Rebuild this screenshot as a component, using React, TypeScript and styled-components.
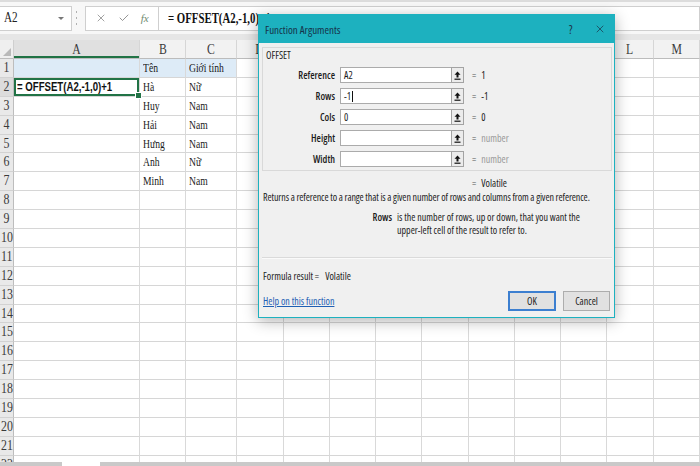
import React from "react";
import styled, { createGlobalStyle } from "styled-components";
import { X, Check } from "lucide-react";

const GlobalStyle = createGlobalStyle`
  html, body { margin: 0; padding: 0; background: #ffffff; }
  * { box-sizing: border-box; }
`;

const App_ = styled.div`
  position: relative;
  width: 700px;
  height: 466px;
  overflow: hidden;
  display: flex;
  flex-direction: column;
  background: #ffffff;
`;

/* ---------- formula bar ---------- */
const TopBar = styled.div`
  flex: none;
  height: 34px;
  display: flex;
  align-items: center;
  background: #f7f7f7;
  border-top: 2px solid #dcdcdc;
`;
const NameBox = styled.div`
  width: 72px;
  height: 25px;
  background: #fff;
  border: 1px solid #cfcfcf;
  border-left: none;
  display: flex;
  align-items: center;
  justify-content: space-between;
  padding: 0 7px 0 4px;
  color: #222;
`;
const NameText = styled.span`
  display: inline-block;
  font-family: "Liberation Serif", serif;
  font-size: 14px;
  transform: scaleX(0.8);
  transform-origin: left center;
`;
const Caret = styled.span`
  width: 0;
  height: 0;
  border-left: 3px solid transparent;
  border-right: 3px solid transparent;
  border-top: 3px solid #777;
`;
const Grip = styled.div`
  width: 13px;
  height: 14px;
  display: flex;
  flex-direction: column;
  align-items: center;
  justify-content: space-between;
  padding-right: 4px;
`;
const GripDot = styled.span`
  width: 1px;
  height: 2px;
  background: #b0b0b0;
`;
const FxBox = styled.div`
  width: 73px;
  height: 25px;
  background: #fff;
  border: 1px solid #cfcfcf;
  border-right: none;
  display: flex;
  align-items: center;
  justify-content: space-around;
  padding: 0 4px;
  color: #7a7a7a;
`;
const Fx = styled.span`
  font-family: "Liberation Serif", serif;
  font-style: italic;
  font-size: 11px;
  color: #6f8a6f;
`;
const FormulaBox = styled.div`
  flex: 1;
  height: 25px;
  background: #fff;
  border: 1px solid #cfcfcf;
  display: flex;
  align-items: center;
  padding-left: 9px;
  color: #111;
`;
const FormulaText = styled.span`
  display: inline-block;
  white-space: nowrap;
  font-family: "Liberation Serif", serif;
  font-size: 15px;
  font-weight: 700;
  transform: scaleX(0.72);
  transform-origin: left center;
`;
const Band = styled.div`
  flex: none;
  height: 6px;
  background: #e6e6e6;
`;

/* ---------- sheet ---------- */
const Sheet = styled.div`
  flex: 1;
  min-height: 0;
  overflow: hidden;
  display: grid;
  grid-template-columns: 14px 126px repeat(12, 1fr);
  grid-template-rows: 19px;
  grid-auto-rows: 18.9px;
  align-content: start;
`;
const Squeeze = styled.span<{ $k: number; $center?: boolean }>`
  display: inline-block;
  white-space: nowrap;
  transform: scaleX(${(p) => p.$k});
  transform-origin: ${(p) => (p.$center ? "center" : "left")} center;
`;
const Corner = styled.div`
  position: relative;
  background: #efefef;
  border-right: 1px solid #cfcfcf;
  border-bottom: 1px solid #bcbcbc;
  &::after {
    content: "";
    position: absolute;
    right: 2px;
    bottom: 2px;
    border-left: 8px solid transparent;
    border-bottom: 8px solid #b9b9b9;
  }
`;
const ColHead = styled.div<{ $active?: boolean }>`
  background: ${(p) => (p.$active ? "#e0e0e0" : "#f2f2f2")};
  border-right: 1px solid #d6d6d6;
  border-bottom: 1px solid #bcbcbc;
  box-shadow: ${(p) => (p.$active ? "inset 0 -2px 0 #217346" : "none")};
  display: flex;
  align-items: center;
  justify-content: center;
  font-family: "Liberation Serif", serif;
  font-size: 15px;
  color: #3a3a3a;
`;
const RowHead = styled.div<{ $active?: boolean }>`
  background: ${(p) => (p.$active ? "#dcdcdc" : "#e9e9e9")};
  border-right: 1px solid #bdbdbd;
  border-bottom: 1px solid #d2d2d2;
  display: flex;
  align-items: center;
  justify-content: center;
  font-family: "Liberation Serif", serif;
  font-size: 14px;
  color: #3a3a3a;
`;
const Cell = styled.div<{ $fill?: boolean; $selected?: boolean }>`
  position: relative;
  background: ${(p) => (p.$fill ? "#ddebf7" : "#ffffff")};
  border-right: 1px solid #d9d9d9;
  border-bottom: 1px solid #d6d6d6;
  display: flex;
  align-items: center;
  padding-left: 3px;
  font-family: "Liberation Serif", serif;
  font-size: 13px;
  color: #1a1a1a;
  box-shadow: ${(p) => (p.$selected ? "inset 0 0 0 2px #217346" : "none")};
  ${(p) =>
    p.$selected
      ? `&::after {
    content: "";
    position: absolute;
    right: -3px;
    bottom: -3px;
    width: 5px;
    height: 5px;
    background: #217346;
    border: 1px solid #fff;
    z-index: 2;
  }`
      : ""}
`;
const BoldFormula = styled.span`
  font-family: "Liberation Sans", Arial, sans-serif;
  font-weight: bold;
  font-size: 13px;
  color: #111;
`;
const TabBar = styled.div`
  flex: none;
  height: 4px;
  background: #c9c9c9;
  display: flex;
`;
const Tab = styled.div`
  margin-left: 62px;
  width: 38px;
  background: #ffffff;
`;

/* ---------- dialog ---------- */
const Dialog = styled.div`
  position: absolute;
  left: 258px;
  top: 14px;
  width: 357px;
  height: 304px;
  border: 1px solid #1db1bf;
  background: #f0f0f0;
  box-shadow: 0 3px 14px rgba(0, 0, 0, 0.3);
  display: flex;
  flex-direction: column;
  font-family: "Open Sans", sans-serif;
  font-stretch: 75%;
  color: #1c1c1c;
  z-index: 5;
`;
const TitleBar = styled.div`
  flex: none;
  height: 28px;
  background: #1db1bf;
  display: flex;
  align-items: center;
  padding-left: 6px;
`;
const Title = styled.div`
  flex: 1;
  font-size: 11px;
  color: #16324a;
`;
const TitleBtn = styled.div`
  width: 29px;
  height: 28px;
  display: flex;
  align-items: center;
  justify-content: center;
  font-size: 12px;
  color: #1d3347;
`;
const Body = styled.div`
  flex: 1;
  display: flex;
  flex-direction: column;
  padding: 4px 2px 6px 4px;
  font-size: 10px;
`;
const Group = styled.div`
  margin-left: -1px;
  height: 124px;
  border: 1px solid #d9d9d9;
  display: flex;
  flex-direction: column;
`;
const FuncName = styled.div`
  margin-left: 3px;
  line-height: 14px;
  font-size: 10px;
`;
const Fields = styled.div`
  margin-top: 5px;
  display: flex;
  flex-direction: column;
  gap: 5px;
`;
const FieldRow = styled.div`
  display: grid;
  grid-template-columns: 77px 111px 13px auto;
  height: 16px;
  align-items: center;
`;
const Label = styled.div`
  text-align: right;
  padding-right: 5px;
  font-weight: 600;
  font-size: 10px;
`;
const Input = styled.div`
  height: 16px;
  background: #fff;
  border: 1px solid #ababab;
  border-right: none;
  display: flex;
  align-items: center;
  padding-left: 3px;
  font-size: 10px;
`;
const TextCaret = styled.span`
  display: inline-block;
  width: 1px;
  height: 11px;
  background: #111;
  margin-left: 1px;
`;
const PickBtn = styled.div`
  height: 16px;
  background: #ececec;
  border: 1px solid #a3a3a3;
  display: flex;
  align-items: center;
  justify-content: center;
`;
const Eq = styled.div<{ $muted?: boolean }>`
  padding-left: 8px;
  display: flex;
  gap: 5px;
  font-size: 10px;
  color: ${(p) => (p.$muted ? "#9a9a9a" : "#1c1c1c")};
`;
const EqSign = styled.span`
  color: #555;
`;
const ResultLine = styled.div`
  margin-top: 5px;
  margin-left: 209px;
  line-height: 14px;
  display: flex;
  gap: 5px;
`;
const Desc = styled.div`
  line-height: 14px;
  letter-spacing: -0.1px;
  white-space: nowrap;
`;
const ArgHelp = styled.div`
  margin-top: 7px;
  display: grid;
  grid-template-columns: 129px auto;
  column-gap: 5px;
  line-height: 13px;
`;
const ArgName = styled.div`
  text-align: right;
  font-weight: 600;
`;
const ArgText = styled.div`
  white-space: nowrap;
`;
const Divider = styled.div`
  margin-top: 20px;
  margin-left: -1px;
  height: 1px;
  background: #dadada;
  box-shadow: 0 1px 0 #fafafa;
`;
const FormulaResult = styled.div`
  margin-top: 11px;
  line-height: 14px;
  display: flex;
  gap: 6px;
`;
const Footer = styled.div`
  margin-top: auto;
  display: flex;
  align-items: center;
  gap: 7px;
  margin-right: 2px;
`;
const HelpLink = styled.a`
  flex: 1;
  color: #1f5fb4;
  text-decoration: underline;
  font-size: 10px;
  cursor: pointer;
`;
const Button = styled.button<{ $primary?: boolean }>`
  width: ${(p) => (p.$primary ? "48px" : "47px")};
  height: 20px;
  background: #e1e1e1;
  border: ${(p) => (p.$primary ? "2px solid #3c7fd0" : "1px solid #adadad")};
  font-family: "Open Sans", sans-serif;
  font-stretch: 75%;
  font-size: 10px;
  color: #1c1c1c;
  padding: 0;
`;

const PickIcon = () => (
  <svg width="7" height="9" viewBox="0 0 7 9">
    <path d="M3.5 0.5 L6.5 3.8 H4.5 V6.5 H2.5 V3.8 H0.5 Z" fill="#111" />
    <rect x="0.5" y="7.6" width="6" height="1.2" fill="#111" />
  </svg>
);

const colLetters = ["A", "B", "C", "D", "E", "F", "G", "H", "I", "J", "K", "L", "M"];
const colB = ["Tên", "Hà", "Huy", "Hải", "Hưng", "Anh", "Minh"];
const colC = ["Giới tính", "Nữ", "Nam", "Nam", "Nam", "Nữ", "Nam"];
const ROWS = 22;

type Field = { label: string; value?: React.ReactNode; result: string; muted?: boolean };
const fields: Field[] = [
  { label: "Reference", value: "A2", result: "1" },
  {
    label: "Rows",
    value: (
      <>
        -1
        <TextCaret />
      </>
    ),
    result: "-1",
  },
  { label: "Cols", value: "0", result: "0" },
  { label: "Height", result: "number", muted: true },
  { label: "Width", result: "number", muted: true },
];

export default function App() {
  const rows = Array.from({ length: ROWS }, (_, i) => i + 1);
  return (
    <App_>
      <GlobalStyle />
      <TopBar>
        <NameBox>
          <NameText>A2</NameText>
          <Caret />
        </NameBox>
        <Grip>
          <GripDot />
          <GripDot />
          <GripDot />
        </Grip>
        <FxBox>
          <X size={12} strokeWidth={1.4} />
          <Check size={12} strokeWidth={1.6} />
          <Fx>fx</Fx>
        </FxBox>
        <FormulaBox>
          <FormulaText>= OFFSET(A2,-1,0)+1</FormulaText>
        </FormulaBox>
      </TopBar>
      <Band />
      <Sheet>
        <Corner />
        {colLetters.map((c) => (
          <ColHead key={c} $active={c === "A"}>
            <Squeeze $k={0.78} $center>
              {c}
            </Squeeze>
          </ColHead>
        ))}
        {rows.map((r) => (
          <React.Fragment key={r}>
            <RowHead $active={r === 2}>
              <Squeeze $k={0.85} $center>
                {r}
              </Squeeze>
            </RowHead>
            {colLetters.map((c) => {
              let content: React.ReactNode = null;
              if (c === "A" && r === 2)
                content = (
                  <Squeeze $k={0.74}>
                    <BoldFormula>= OFFSET(A2,-1,0)+1</BoldFormula>
                  </Squeeze>
                );
              else if (c === "B" && colB[r - 1]) content = <Squeeze $k={0.74}>{colB[r - 1]}</Squeeze>;
              else if (c === "C" && colC[r - 1]) content = <Squeeze $k={0.74}>{colC[r - 1]}</Squeeze>;
              return (
                <Cell
                  key={c}
                  $fill={r === 1 && (c === "A" || c === "B" || c === "C")}
                  $selected={r === 2 && c === "A"}
                >
                  {content}
                </Cell>
              );
            })}
          </React.Fragment>
        ))}
      </Sheet>
      <TabBar>
        <Tab />
      </TabBar>

      <Dialog>
        <TitleBar>
          <Title>Function Arguments</Title>
          <TitleBtn>?</TitleBtn>
          <TitleBtn>
            <X size={12} strokeWidth={1.4} />
          </TitleBtn>
        </TitleBar>
        <Body>
          <Group>
            <FuncName>OFFSET</FuncName>
            <Fields>
              {fields.map((f) => (
                <FieldRow key={f.label}>
                  <Label>{f.label}</Label>
                  <Input>{f.value}</Input>
                  <PickBtn>
                    <PickIcon />
                  </PickBtn>
                  <Eq $muted={f.muted}>
                    <EqSign>=</EqSign>
                    <span>{f.result}</span>
                  </Eq>
                </FieldRow>
              ))}
            </Fields>
          </Group>
          <ResultLine>
            <EqSign>=</EqSign>
            <span>Volatile</span>
          </ResultLine>
          <Desc>
            Returns a reference to a range that is a given number of rows and columns from a given reference.
          </Desc>
          <ArgHelp>
            <ArgName>Rows</ArgName>
            <ArgText>
              is the number of rows, up or down, that you want the
              <br />
              upper-left cell of the result to refer to.
            </ArgText>
          </ArgHelp>
          <Divider />
          <FormulaResult>
            <span>Formula result =</span>
            <span>Volatile</span>
          </FormulaResult>
          <Footer>
            <HelpLink>Help on this function</HelpLink>
            <Button $primary>OK</Button>
            <Button>Cancel</Button>
          </Footer>
        </Body>
      </Dialog>
    </App_>
  );
}
